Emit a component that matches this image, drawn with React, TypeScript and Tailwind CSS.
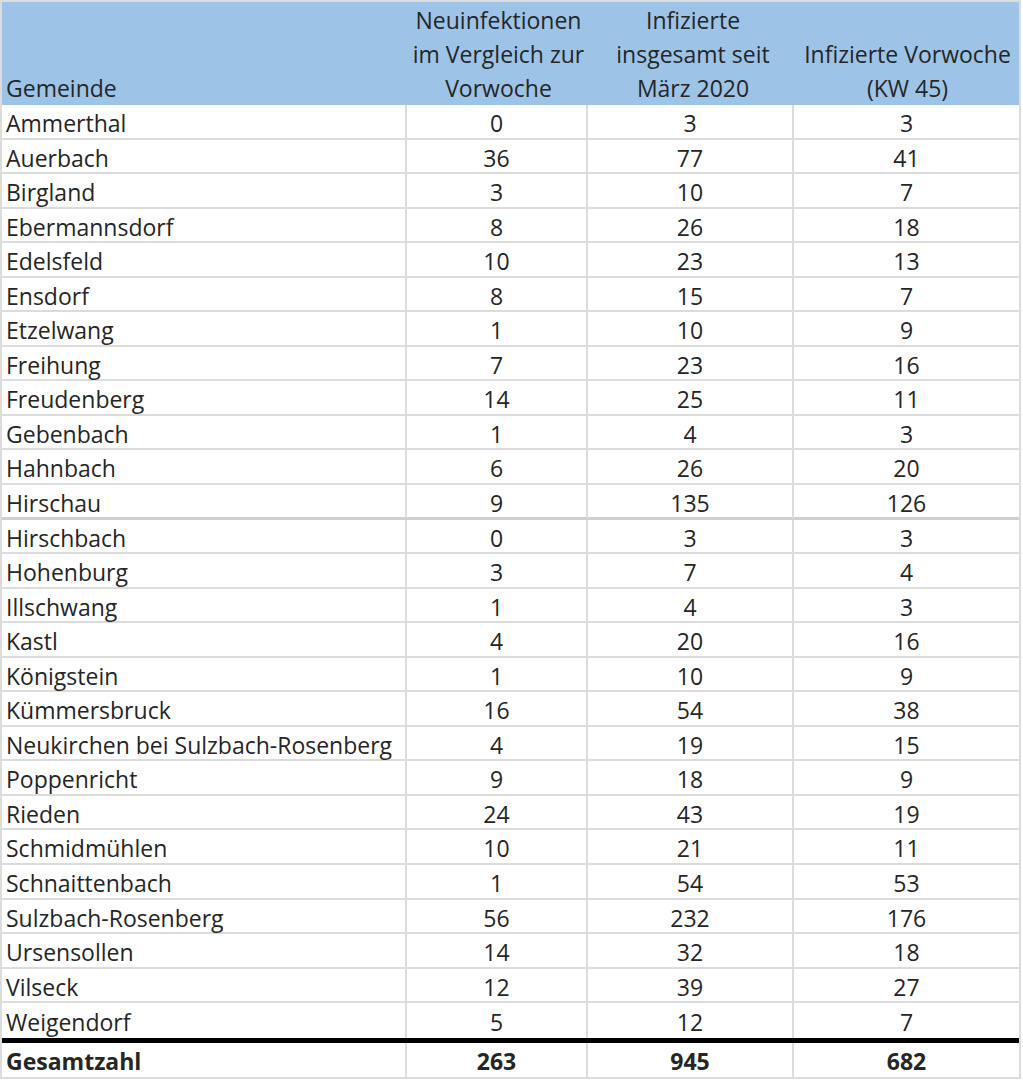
import React from "react";

const rows: [string, number, number, number][] = [
  ["Ammerthal", 0, 3, 3],
  ["Auerbach", 36, 77, 41],
  ["Birgland", 3, 10, 7],
  ["Ebermannsdorf", 8, 26, 18],
  ["Edelsfeld", 10, 23, 13],
  ["Ensdorf", 8, 15, 7],
  ["Etzelwang", 1, 10, 9],
  ["Freihung", 7, 23, 16],
  ["Freudenberg", 14, 25, 11],
  ["Gebenbach", 1, 4, 3],
  ["Hahnbach", 6, 26, 20],
  ["Hirschau", 9, 135, 126],
  ["Hirschbach", 0, 3, 3],
  ["Hohenburg", 3, 7, 4],
  ["Illschwang", 1, 4, 3],
  ["Kastl", 4, 20, 16],
  ["Königstein", 1, 10, 9],
  ["Kümmersbruck", 16, 54, 38],
  ["Neukirchen bei Sulzbach-Rosenberg", 4, 19, 15],
  ["Poppenricht", 9, 18, 9],
  ["Rieden", 24, 43, 19],
  ["Schmidmühlen", 10, 21, 11],
  ["Schnaittenbach", 1, 54, 53],
  ["Sulzbach-Rosenberg", 56, 232, 176],
  ["Ursensollen", 14, 32, 18],
  ["Vilseck", 12, 39, 27],
  ["Weigendorf", 5, 12, 7],
];

const grid = "grid grid-cols-[405px_181px_206px_225px]";

export default function App() {
  return (
    <div
      className="w-[1023px] h-[1080px] bg-white text-[#262626] text-[23px]"
      style={{ fontFamily: '"Open Sans", "Noto Sans", sans-serif' }}
    >
      <div className="w-[1021px] border-l-2 border-t-2 border-r-2 border-[#dcdcdc]">
        {/* header */}
        <div className={`${grid} h-[103px] bg-[#9dc3e6] leading-[34px]`}>
          <div className="flex items-end pl-[4px]">Gemeinde</div>
          <div className="flex items-end justify-center text-center pl-[2px]">
            Neuinfektionen
            <br />
            im Vergleich zur
            <br />
            Vorwoche
          </div>
          <div className="flex items-end justify-center text-center pl-[4px]">
            Infizierte
            <br />
            insgesamt seit
            <br />
            März 2020
          </div>
          <div className="flex items-end justify-center text-center pl-[2px]">
            Infizierte Vorwoche
            <br />
            (KW 45)
          </div>
        </div>
        {/* data rows */}
        {rows.map(([name, a, b, c], i) => (
          <div
            key={name}
            className={`${grid} h-[34.55px] leading-[30px] ${
              i === 11 ? "border-b-[3px] border-[#cfcfcf]" : i === 26 ? "" : "border-b-2 border-[#dcdcdc]"
            }`}
          >
            <div className="flex items-center pl-[4px] pt-[3px] border-r-2 border-[#dcdcdc]">{name}</div>
            <div className="flex items-center justify-center pt-[3px] border-r-2 border-[#dcdcdc]">{a}</div>
            <div className="flex items-center justify-center pt-[3px] border-r-2 border-[#dcdcdc]">{b}</div>
            <div className="flex items-center justify-center pt-[3px]">{c}</div>
          </div>
        ))}
        <div className="h-[5px] bg-black" />
        <div className={`${grid} h-[36px] leading-[30px] border-b-2 border-[#dcdcdc] font-bold`}>
          <div className="flex items-center pl-[4px] pt-[3px] border-r-2 border-[#dcdcdc]">Gesamtzahl</div>
          <div className="flex items-center justify-center pt-[3px] border-r-2 border-[#dcdcdc]">263</div>
          <div className="flex items-center justify-center pt-[3px] border-r-2 border-[#dcdcdc]">945</div>
          <div className="flex items-center justify-center pt-[3px]">682</div>
        </div>
      </div>
    </div>
  );
}
